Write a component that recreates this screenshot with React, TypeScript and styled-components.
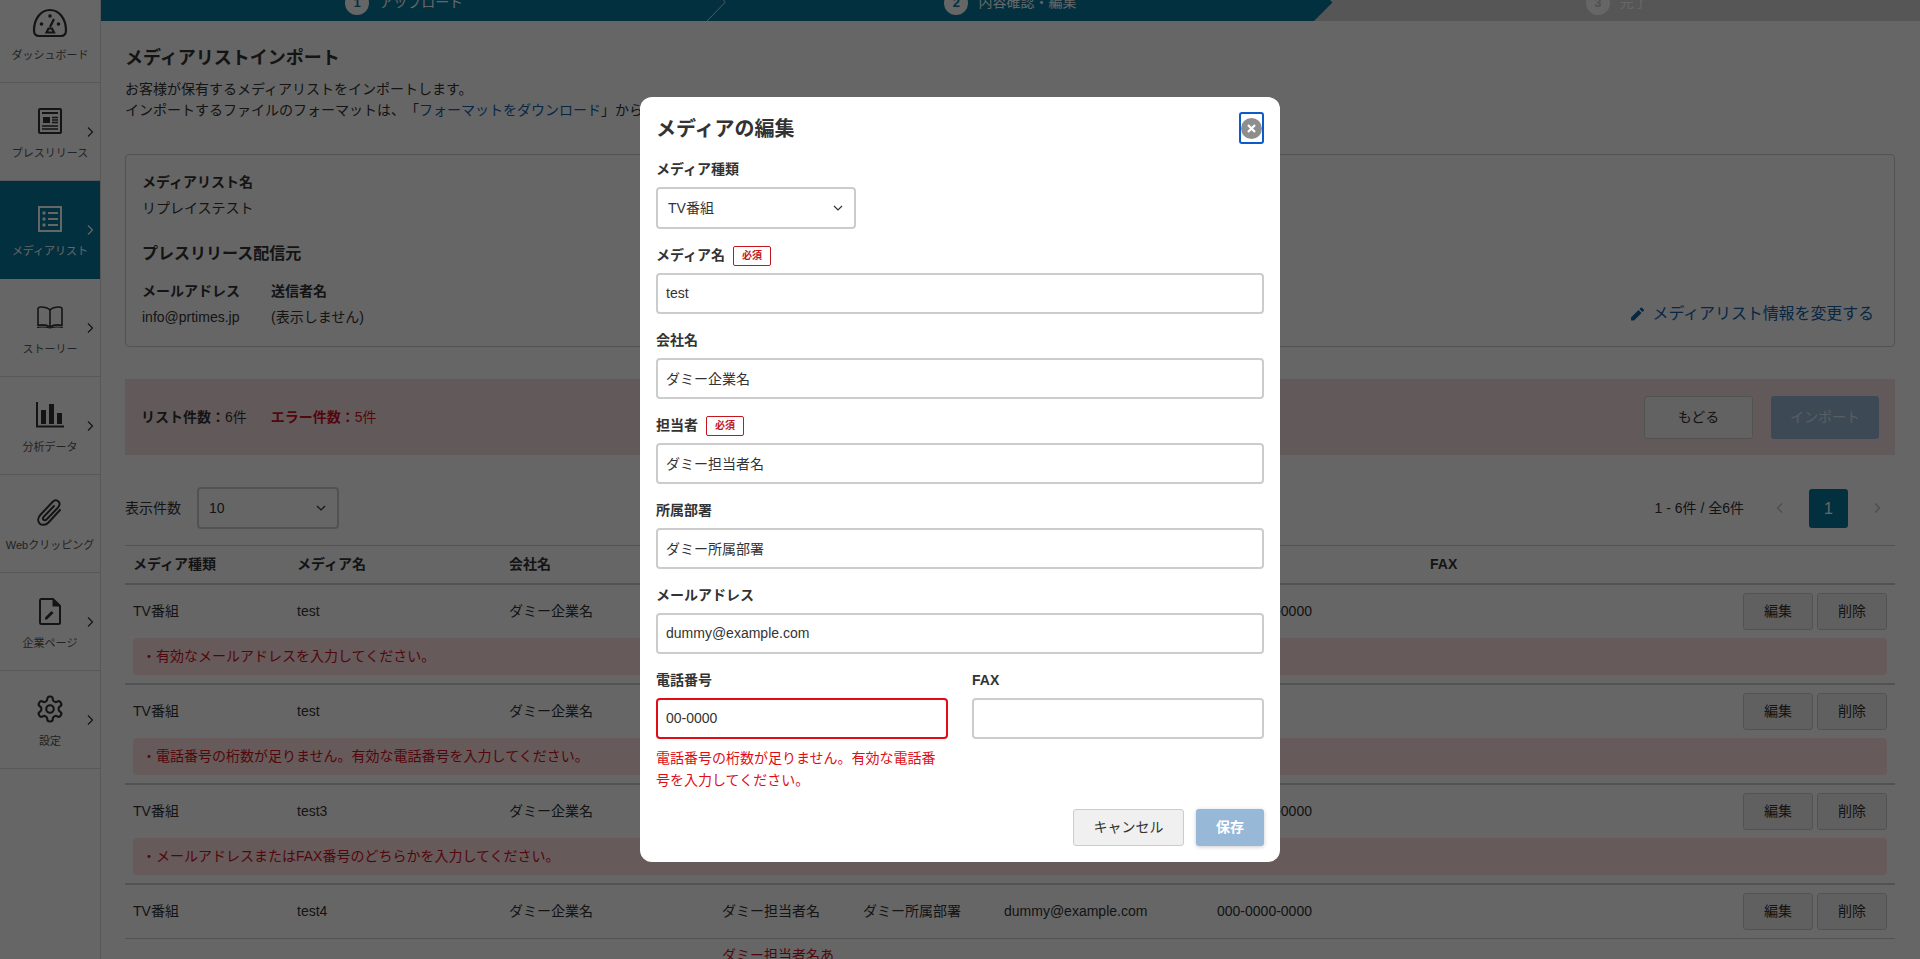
import React from 'react';
import styled, { createGlobalStyle } from 'styled-components';

const GlobalStyle = createGlobalStyle`
  * { box-sizing: border-box; }
  html, body { margin: 0; padding: 0; height: 100%; background: #fff; }
  body {
    font-family: "Liberation Sans", "Noto Sans CJK JP", sans-serif;
    font-size: 14px;
    line-height: 21px;
    color: #333;
    text-spacing-trim: space-all;
  }
`;

const TEAL = '#07789e';
const RED_TEXT = '#d0101c';

/* ---------- icons ---------- */

const DashIcon = () => (
  <svg width="36" height="30" viewBox="0 0 36 30" fill="none" stroke="currentColor" strokeWidth="2.2">
    <path d="M7 28C4 28 2 26 2 22.5 2 10.5 9 2 18 2s16 8.5 16 20.5C34 26 32 28 29 28Z" />
    <circle cx="18" cy="8" r="1.8" fill="currentColor" stroke="none" />
    <circle cx="9.5" cy="16" r="1.8" fill="currentColor" stroke="none" />
    <circle cx="26.5" cy="16" r="1.8" fill="currentColor" stroke="none" />
    <path d="M18 19l4-8" />
    <path d="M14.5 24.5l2-4h3.5l2 4Z" />
  </svg>
);

const PressIcon = () => (
  <svg width="24" height="26" viewBox="0 0 24 26" fill="none" stroke="currentColor">
    <rect x="1" y="1" width="22" height="24" rx="1" strokeWidth="2" />
    <path d="M4 5h16" strokeWidth="2" />
    <rect x="5" y="9" width="7" height="6" fill="currentColor" stroke="none" />
    <path d="M14 9.5h6M14 12h6M14 14.5h6M4 18h16M4 21h16" strokeWidth="1.3" />
  </svg>
);

const ListIcon = () => (
  <svg width="24" height="26" viewBox="0 0 24 26" fill="none" stroke="currentColor">
    <rect x="1" y="1" width="22" height="24" strokeWidth="2" />
    <circle cx="6" cy="7" r="1.7" fill="currentColor" stroke="none" />
    <circle cx="6" cy="13" r="1.7" fill="currentColor" stroke="none" />
    <circle cx="6" cy="19" r="1.7" fill="currentColor" stroke="none" />
    <path d="M10 7h10M10 13h10M10 19h10" strokeWidth="1.8" />
  </svg>
);

const BookIcon = () => (
  <svg width="28" height="23" viewBox="0 0 28 23" fill="none" stroke="currentColor" strokeWidth="1.6" strokeLinejoin="round">
    <path d="M14 4C12 2 9 1 5 1 3.500 1 2 1.500 2 3v16.500c3-.8 8-1 12 1.500 4-2.500 9-2.300 12-1.500V3c0-1.500-1.500-2-3-2-4 0-7 1-9 3Z" />
    <path d="M14 4v17" />
    <path d="M1 21.500c4-.8 9-.5 13 .5 4-1 9-1.300 13-.5" strokeWidth="1.2" />
  </svg>
);

const BarsIcon = () => (
  <svg width="28" height="26" viewBox="0 0 28 26" fill="currentColor">
    <path d="M0 0h2v23.500h26V25.500H0Z" />
    <rect x="5" y="8" width="5" height="14" />
    <rect x="13" y="2" width="5" height="20" />
    <rect x="21" y="11" width="5" height="11" />
  </svg>
);

const ClipIcon = () => (
  <svg width="26" height="28" viewBox="0 0 26 28" fill="none" stroke="currentColor" strokeWidth="2" strokeLinecap="round">
    <path d="M23 11 11.500 23.500c-3 3-7 3-9 .8-2-2.200-1.500-5.800 1-8.500L15.500 3c2-2 4.500-2 6-.5s1.500 4-.5 6L9.500 20.500c-1 1-2.300 1-3 .3s-.7-2 .3-3L17 7" />
  </svg>
);

const PageIcon = () => (
  <svg width="22" height="27" viewBox="0 0 22 27" fill="none" stroke="currentColor">
    <path d="M2.500 1H14l7 7v16.500a1.500 1.500 0 0 1-1.500 1.500h-17A1.500 1.500 0 0 1 1 24.500v-22A1.500 1.500 0 0 1 2.500 1Z" strokeWidth="2" />
    <path d="M13.500 1v7.500H21Z" fill="currentColor" stroke="none" />
    <path d="M6 21.500v-2l6.500-6.500 2 2L8 21.500Z" fill="currentColor" stroke="none" />
  </svg>
);

const GearIcon = () => (
  <svg width="30" height="30" viewBox="0 0 24 24" fill="none" stroke="currentColor" strokeWidth="1.7" strokeLinejoin="round">
    <path d="M12.220 2h-.440a2 2 0 0 0-2 2v.180a2 2 0 0 1-1 1.730l-.430.250a2 2 0 0 1-2 0l-.150-.080a2 2 0 0 0-2.730.730l-.220.380a2 2 0 0 0 .730 2.730l.150.100a2 2 0 0 1 1 1.720v.510a2 2 0 0 1-1 1.740l-.150.090a2 2 0 0 0-.730 2.730l.220.380a2 2 0 0 0 2.730.730l.150-.080a2 2 0 0 1 2 0l.430.250a2 2 0 0 1 1 1.730V20a2 2 0 0 0 2 2h.440a2 2 0 0 0 2-2v-.180a2 2 0 0 1 1-1.730l.430-.250a2 2 0 0 1 2 0l.150.080a2 2 0 0 0 2.730-.730l.220-.390a2 2 0 0 0-.730-2.730l-.150-.080a2 2 0 0 1-1-1.740v-.500a2 2 0 0 1 1-1.740l.150-.090a2 2 0 0 0 .730-2.730l-.220-.380a2 2 0 0 0-2.730-.730l-.150.080a2 2 0 0 1-2 0l-.430-.250a2 2 0 0 1-1-1.730V4a2 2 0 0 0-2-2z" />
    <circle cx="12" cy="12" r="3" />
  </svg>
);

const Chevron = ({ dir = 'right', size = 12 }: { dir?: 'right' | 'left' | 'down'; size?: number }) => {
  const d = dir === 'right' ? 'M4 1.500 8.500 6 4 10.500' : dir === 'left' ? 'M8 1.500 3.500 6 8 10.500' : 'M2 4l4 4 4-4';
  return (
    <svg width={size} height={size} viewBox="0 0 12 12" fill="none" stroke="currentColor" strokeWidth="1.200">
      <path d={d} />
    </svg>
  );
};

const PencilIcon = () => (
  <svg width="14" height="14" viewBox="0 0 14 14" fill="currentColor">
    <path d="M1 10.500V13.500h3l7.500-7.500-3-3ZM12.500 5l-3-3 1.300-1.300a.8.8 0 0 1 1.100 0l1.900 1.900a.8.8 0 0 1 0 1.100Z" />
  </svg>
);

/* ---------- page shell ---------- */

const Viewport = styled.div`
  height: 100vh;
  overflow: hidden;
`;

const Page = styled.div`
  display: flex;
  margin-top: -16px;
`;

const Sidebar = styled.nav`
  flex: 0 0 101px;
  padding-top: 1px;
  border-right: 1px solid #ddd;
`;

const NavItem = styled.div<{ $active?: boolean }>`
  position: relative;
  height: 98px;
  padding-top: 18px;
  display: flex;
  flex-direction: column;
  align-items: center;
  background: ${(p) => (p.$active ? TEAL : 'transparent')};
  color: ${(p) => (p.$active ? '#fff' : '#333')};
  border-bottom: 1px solid ${(p) => (p.$active ? TEAL : '#ddd')};
`;

const NavIconBox = styled.div`
  height: 40px;
  display: flex;
  align-items: center;
  justify-content: center;
`;

const NavLabel = styled.div<{ $active?: boolean }>`
  margin-top: 4px;
  font-size: 11px;
  line-height: 16px;
  white-space: nowrap;
  color: ${(p) => (p.$active ? '#fff' : '#555')};
`;

const NavArrow = styled.span`
  position: absolute;
  top: 43px;
  left: 84px;
  display: flex;
`;

const Main = styled.main`
  flex: 1;
  min-width: 0;
`;

const Steps = styled.div`
  display: flex;
  height: 37px;
  background: #d8d8d8;
`;

const Step = styled.div<{ $done?: boolean }>`
  position: relative;
  flex: 1;
  display: flex;
  align-items: center;
  justify-content: center;
  gap: 10px;
  background: ${(p) => (p.$done ? TEAL : 'transparent')};
  color: #fff;
`;

const StepTip = styled.svg`
  position: absolute;
  left: 100%;
  top: 0;
  z-index: 1;
`;

const StepNumber = styled.span<{ $done?: boolean }>`
  width: 24px;
  height: 24px;
  border-radius: 50%;
  background: #fff;
  color: ${(p) => (p.$done ? TEAL : '#c8c8c8')};
  display: flex;
  align-items: center;
  justify-content: center;
  font-weight: bold;
  font-size: 13px;
`;

const Content = styled.div`
  padding: 24px 25px 0 24px;
`;

const Title = styled.h1`
  margin: 0 0 7px;
  font-size: 18px;
  line-height: 27px;
  font-weight: bold;
`;

const Description = styled.p`
  margin: 0 0 33px;
`;

const TextLink = styled.a`
  color: #1264ab;
`;

const Card = styled.section`
  display: flex;
  justify-content: space-between;
  align-items: flex-end;
  height: 193px;
  padding: 15px 20px 18px 16px;
  border: 1px solid #ccc;
  border-radius: 4px;
`;

const FieldTitle = styled.div`
  font-weight: bold;
`;

const FieldValue = styled.div`
  margin-top: 5px;
`;

const SectionTitle = styled.div`
  margin: 23px 0 15px;
  font-size: 16px;
  line-height: 24px;
  font-weight: bold;
`;

const SenderRow = styled.div`
  display: flex;
  gap: 31px;
`;

const EditLink = styled.a`
  display: flex;
  align-items: center;
  gap: 9px;
  margin-bottom: 2px;
  font-size: 16px;
  line-height: 24px;
  letter-spacing: -0.1px;
  color: #1264ab;
`;

const Summary = styled.section`
  display: flex;
  align-items: center;
  justify-content: space-between;
  height: 76px;
  margin-top: 32px;
  padding: 0 16px;
  background: #f6e2e2;
`;

const SummaryCounts = styled.div`
  display: flex;
  gap: 24px;
`;

const Count = styled.span<{ $error?: boolean }>`
  color: ${(p) => (p.$error ? RED_TEXT : '#333')};
  b { font-weight: bold; }
`;

const SummaryActions = styled.div`
  display: flex;
  gap: 18px;
`;

const GhostButton = styled.button`
  width: 109px;
  height: 43px;
  border: 1px solid #ccc;
  border-radius: 3px;
  background: #f6f6f6;
  color: #333;
  font: inherit;
`;

const DisabledPrimary = styled.button`
  width: 108px;
  height: 43px;
  border: 0;
  border-radius: 3px;
  background: #98b8d8;
  color: #dfe8f2;
  font: inherit;
`;

const ListControls = styled.div`
  display: flex;
  justify-content: space-between;
  align-items: center;
  margin-top: 32px;
  height: 42px;
`;

const PerPage = styled.div`
  display: flex;
  align-items: center;
  gap: 16px;
`;

const SelectBox = styled.div<{ $width: number }>`
  display: flex;
  align-items: center;
  justify-content: space-between;
  width: ${(p) => p.$width}px;
  height: 42px;
  padding: 0 10px;
  border: 2px solid #ccc;
  border-radius: 4px;
  background: #fff;
`;

const Pager = styled.div`
  display: flex;
  align-items: center;
  padding-right: 12px;
`;

const PagerInfo = styled.span`
  margin-right: 30px;
`;

const PagerArrow = styled.span`
  display: flex;
  color: #bbb;
`;

const PagerCurrent = styled.span`
  width: 39px;
  height: 39px;
  margin: 0 23px;
  display: flex;
  align-items: center;
  justify-content: center;
  border-radius: 3px;
  background: ${TEAL};
  color: #fff;
  font-size: 16px;
`;

const Table = styled.div`
  margin-top: 16px;
  border-top: 1px solid #ccc;
`;

const Grid = styled.div`
  display: grid;
  grid-template-columns: 164px 212px 213px 141px 141px 213px 213px 1fr 152px;
  align-items: center;
`;

const HeadRow = styled(Grid)`
  height: 39px;
  border-bottom: 2px solid #ccc;
  font-weight: bold;
`;

const Cell = styled.div`
  padding-left: 8px;
  white-space: nowrap;
`;

const Row = styled.div<{ $thin?: boolean }>`
  padding: 8px 8px 8px 0;
  border-bottom: ${(p) => (p.$thin ? '1px' : '2px')} solid #ccc;
`;

const RowActions = styled.div`
  display: flex;
  justify-content: flex-end;
  gap: 4px;
`;

const SmallButton = styled.button`
  width: 70px;
  height: 37px;
  border: 1px solid #ccc;
  border-radius: 3px;
  background: #f0f0f0;
  color: #333;
  font: inherit;
`;

const RowError = styled.div`
  margin: 8px 0 0 8px;
  height: 37px;
  padding: 8px 8px 8px 9px;
  border-radius: 4px;
  background: #ffe0e0;
  color: ${RED_TEXT};
`;

const OverflowName = styled.div`
  margin-top: 6px;
  padding-left: 597px;
  color: ${RED_TEXT};
`;

/* ---------- modal ---------- */

const Overlay = styled.div`
  position: fixed;
  inset: 0;
  z-index: 10;
  display: flex;
  align-items: center;
  justify-content: center;
  background: rgba(0, 0, 0, 0.6);
`;

const Modal = styled.div`
  width: 640px;
  padding: 15px 16px 16px;
  border-radius: 12px;
  background: #fff;
`;

const ModalHeader = styled.div`
  display: flex;
  align-items: center;
  justify-content: space-between;
  margin-bottom: 14px;
`;

const ModalTitle = styled.h2`
  margin: 2px 0 0;
  font-size: 20px;
  line-height: 30px;
  font-weight: bold;
`;

const CloseButton = styled.button`
  width: 25px;
  height: 32px;
  padding: 0;
  display: flex;
  align-items: center;
  justify-content: center;
  border: 2px solid #0b5cc8;
  border-radius: 3px;
  background: #fff;
`;

const CloseDisc = styled.span`
  flex: none;
  width: 21px;
  height: 21px;
  border-radius: 50%;
  background: #8e8e8e;
  display: flex;
  align-items: center;
  justify-content: center;
`;

const Field = styled.div`
  margin-bottom: 15px;
`;

const LabelRow = styled.div`
  display: flex;
  align-items: center;
  gap: 8px;
  height: 21px;
  padding-top: 2px;
  margin-bottom: 8px;
  font-weight: bold;
`;

const RequiredBadge = styled.span`
  width: 38px;
  height: 20px;
  display: flex;
  align-items: center;
  justify-content: center;
  border: 1px solid #c4161c;
  border-radius: 2px;
  color: #c4161c;
  font-size: 10px;
  line-height: 1;
  font-weight: bold;
`;

const Input = styled.input<{ $invalid?: boolean }>`
  display: block;
  width: 100%;
  height: 41px;
  padding: 0 8px 1px;
  border: 2px solid ${(p) => (p.$invalid ? '#e00d16' : '#ccc')};
  border-radius: 4px;
  background: #fff;
  color: #333;
  font: inherit;
  outline: 0;
`;

const TwoColumns = styled.div`
  display: grid;
  grid-template-columns: 292px 292px;
  gap: 24px;
`;

const ErrorText = styled.div`
  margin-top: 8px;
  color: #e00d16;
  line-height: 22px;
`;

const ModalFooter = styled.div`
  display: flex;
  justify-content: flex-end;
  gap: 12px;
  margin-top: 3px;
`;

const CancelButton = styled.button`
  width: 111px;
  height: 37px;
  border: 1px solid #ccc;
  border-radius: 3px;
  background: #f0f0f0;
  color: #333;
  font: inherit;
`;

const SaveButton = styled.button`
  width: 68px;
  height: 37px;
  border: 0;
  border-radius: 3px;
  background: #98b8d8;
  color: #fff;
  font: inherit;
  font-weight: bold;
  box-shadow: 0 1px 4px rgba(0, 0, 0, 0.2);
`;

/* ---------- data ---------- */

const navItems = [
  { label: 'ダッシュボード', icon: <DashIcon /> },
  { label: 'プレスリリース', icon: <PressIcon />, arrow: true },
  { label: 'メディアリスト', icon: <ListIcon />, arrow: true, active: true },
  { label: 'ストーリー', icon: <BookIcon />, arrow: true },
  { label: '分析データ', icon: <BarsIcon />, arrow: true },
  { label: 'Webクリッピング', icon: <ClipIcon /> },
  { label: '企業ページ', icon: <PageIcon />, arrow: true },
  { label: '設定', icon: <GearIcon />, arrow: true },
];

const rows = [
  { name: 'test', error: '・有効なメールアドレスを入力してください。' },
  { name: 'test', tel: '00-0000', error: '・電話番号の桁数が足りません。有効な電話番号を入力してください。' },
  { name: 'test3', error: '・メールアドレスまたはFAX番号のどちらかを入力してください。' },
  { name: 'test4' },
];

function App() {
  return (
    <>
      <GlobalStyle />
      <Viewport>
        <Page>
          <Sidebar>
            {navItems.map((item) => (
              <NavItem key={item.label} $active={item.active}>
                <NavIconBox>{item.icon}</NavIconBox>
                <NavLabel $active={item.active}>{item.label}</NavLabel>
                {item.arrow && (
                  <NavArrow>
                    <Chevron />
                  </NavArrow>
                )}
              </NavItem>
            ))}
          </Sidebar>
          <Main>
            <Steps>
              <Step $done>
                <StepNumber $done>1</StepNumber>
                アップロード
                <StepTip width="20" height="37" viewBox="0 0 20 37" fill="none">
                  <path d="M0 37 18 18.500 16 15" stroke="#d8d8d8" strokeWidth="1" />
                </StepTip>
              </Step>
              <Step $done>
                <StepNumber $done>2</StepNumber>
                内容確認・編集
                <StepTip width="20" height="37" viewBox="0 0 20 37">
                  <path d="M0 0 18.500 18.500 0 37Z" fill={TEAL} />
                </StepTip>
              </Step>
              <Step>
                <StepNumber>3</StepNumber>
                完了
              </Step>
            </Steps>
            <Content>
              <Title>メディアリストインポート</Title>
              <Description>
                お客様が保有するメディアリストをインポートします。
                <br />
                インポートするファイルのフォーマットは、「<TextLink>フォーマットをダウンロード</TextLink>
                」からダウンロードしてください。
              </Description>
              <Card>
                <div>
                  <FieldTitle>メディアリスト名</FieldTitle>
                  <FieldValue>リプレイステスト</FieldValue>
                  <SectionTitle>プレスリリース配信元</SectionTitle>
                  <SenderRow>
                    <div>
                      <FieldTitle>メールアドレス</FieldTitle>
                      <FieldValue>info@prtimes.jp</FieldValue>
                    </div>
                    <div>
                      <FieldTitle>送信者名</FieldTitle>
                      <FieldValue>(表示しません)</FieldValue>
                    </div>
                  </SenderRow>
                </div>
                <EditLink>
                  <PencilIcon />
                  メディアリスト情報を変更する
                </EditLink>
              </Card>
              <Summary>
                <SummaryCounts>
                  <Count>
                    <b>リスト件数：</b>6件
                  </Count>
                  <Count $error>
                    <b>エラー件数：</b>5件
                  </Count>
                </SummaryCounts>
                <SummaryActions>
                  <GhostButton>もどる</GhostButton>
                  <DisabledPrimary>インポート</DisabledPrimary>
                </SummaryActions>
              </Summary>
              <ListControls>
                <PerPage>
                  表示件数
                  <SelectBox $width={142}>
                    10
                    <Chevron dir="down" />
                  </SelectBox>
                </PerPage>
                <Pager>
                  <PagerInfo>1 - 6件 / 全6件</PagerInfo>
                  <PagerArrow>
                    <Chevron dir="left" />
                  </PagerArrow>
                  <PagerCurrent>1</PagerCurrent>
                  <PagerArrow>
                    <Chevron />
                  </PagerArrow>
                </Pager>
              </ListControls>
              <Table>
                <HeadRow>
                  <Cell>メディア種類</Cell>
                  <Cell>メディア名</Cell>
                  <Cell>会社名</Cell>
                  <Cell>担当者</Cell>
                  <Cell>所属部署</Cell>
                  <Cell>メールアドレス</Cell>
                  <Cell>電話番号</Cell>
                  <Cell>FAX</Cell>
                  <Cell />
                </HeadRow>
                {rows.map((row, i) => (
                  <Row key={i} $thin={!row.error}>
                    <Grid>
                      <Cell>TV番組</Cell>
                      <Cell>{row.name}</Cell>
                      <Cell>ダミー企業名</Cell>
                      <Cell>ダミー担当者名</Cell>
                      <Cell>ダミー所属部署</Cell>
                      <Cell>dummy@example.com</Cell>
                      <Cell>{row.tel ?? '000-0000-0000'}</Cell>
                      <Cell />
                      <RowActions>
                        <SmallButton>編集</SmallButton>
                        <SmallButton>削除</SmallButton>
                      </RowActions>
                    </Grid>
                    {row.error && <RowError>{row.error}</RowError>}
                  </Row>
                ))}
                <OverflowName>ダミー担当者名あ</OverflowName>
              </Table>
            </Content>
          </Main>
        </Page>
      </Viewport>
      <Overlay>
        <Modal>
          <ModalHeader>
            <ModalTitle>メディアの編集</ModalTitle>
            <CloseButton aria-label="閉じる">
              <CloseDisc>
                <svg width="11" height="11" viewBox="0 0 11 11" stroke="#fff" strokeWidth="2.200">
                  <path d="M2 2l7 7M9 2l-7 7" />
                </svg>
              </CloseDisc>
            </CloseButton>
          </ModalHeader>
          <Field>
            <LabelRow>メディア種類</LabelRow>
            <SelectBox $width={200}>
              TV番組
              <Chevron dir="down" />
            </SelectBox>
          </Field>
          <Field>
            <LabelRow>
              メディア名<RequiredBadge>必須</RequiredBadge>
            </LabelRow>
            <Input readOnly value="test" />
          </Field>
          <Field>
            <LabelRow>会社名</LabelRow>
            <Input readOnly value="ダミー企業名" />
          </Field>
          <Field>
            <LabelRow>
              担当者<RequiredBadge>必須</RequiredBadge>
            </LabelRow>
            <Input readOnly value="ダミー担当者名" />
          </Field>
          <Field>
            <LabelRow>所属部署</LabelRow>
            <Input readOnly value="ダミー所属部署" />
          </Field>
          <Field>
            <LabelRow>メールアドレス</LabelRow>
            <Input readOnly value="dummy@example.com" />
          </Field>
          <TwoColumns>
            <Field>
              <LabelRow>電話番号</LabelRow>
              <Input readOnly $invalid value="00-0000" />
              <ErrorText>電話番号の桁数が足りません。有効な電話番号を入力してください。</ErrorText>
            </Field>
            <Field>
              <LabelRow>FAX</LabelRow>
              <Input readOnly value="" />
            </Field>
          </TwoColumns>
          <ModalFooter>
            <CancelButton>キャンセル</CancelButton>
            <SaveButton>保存</SaveButton>
          </ModalFooter>
        </Modal>
      </Overlay>
    </>
  );
}

export default App;
